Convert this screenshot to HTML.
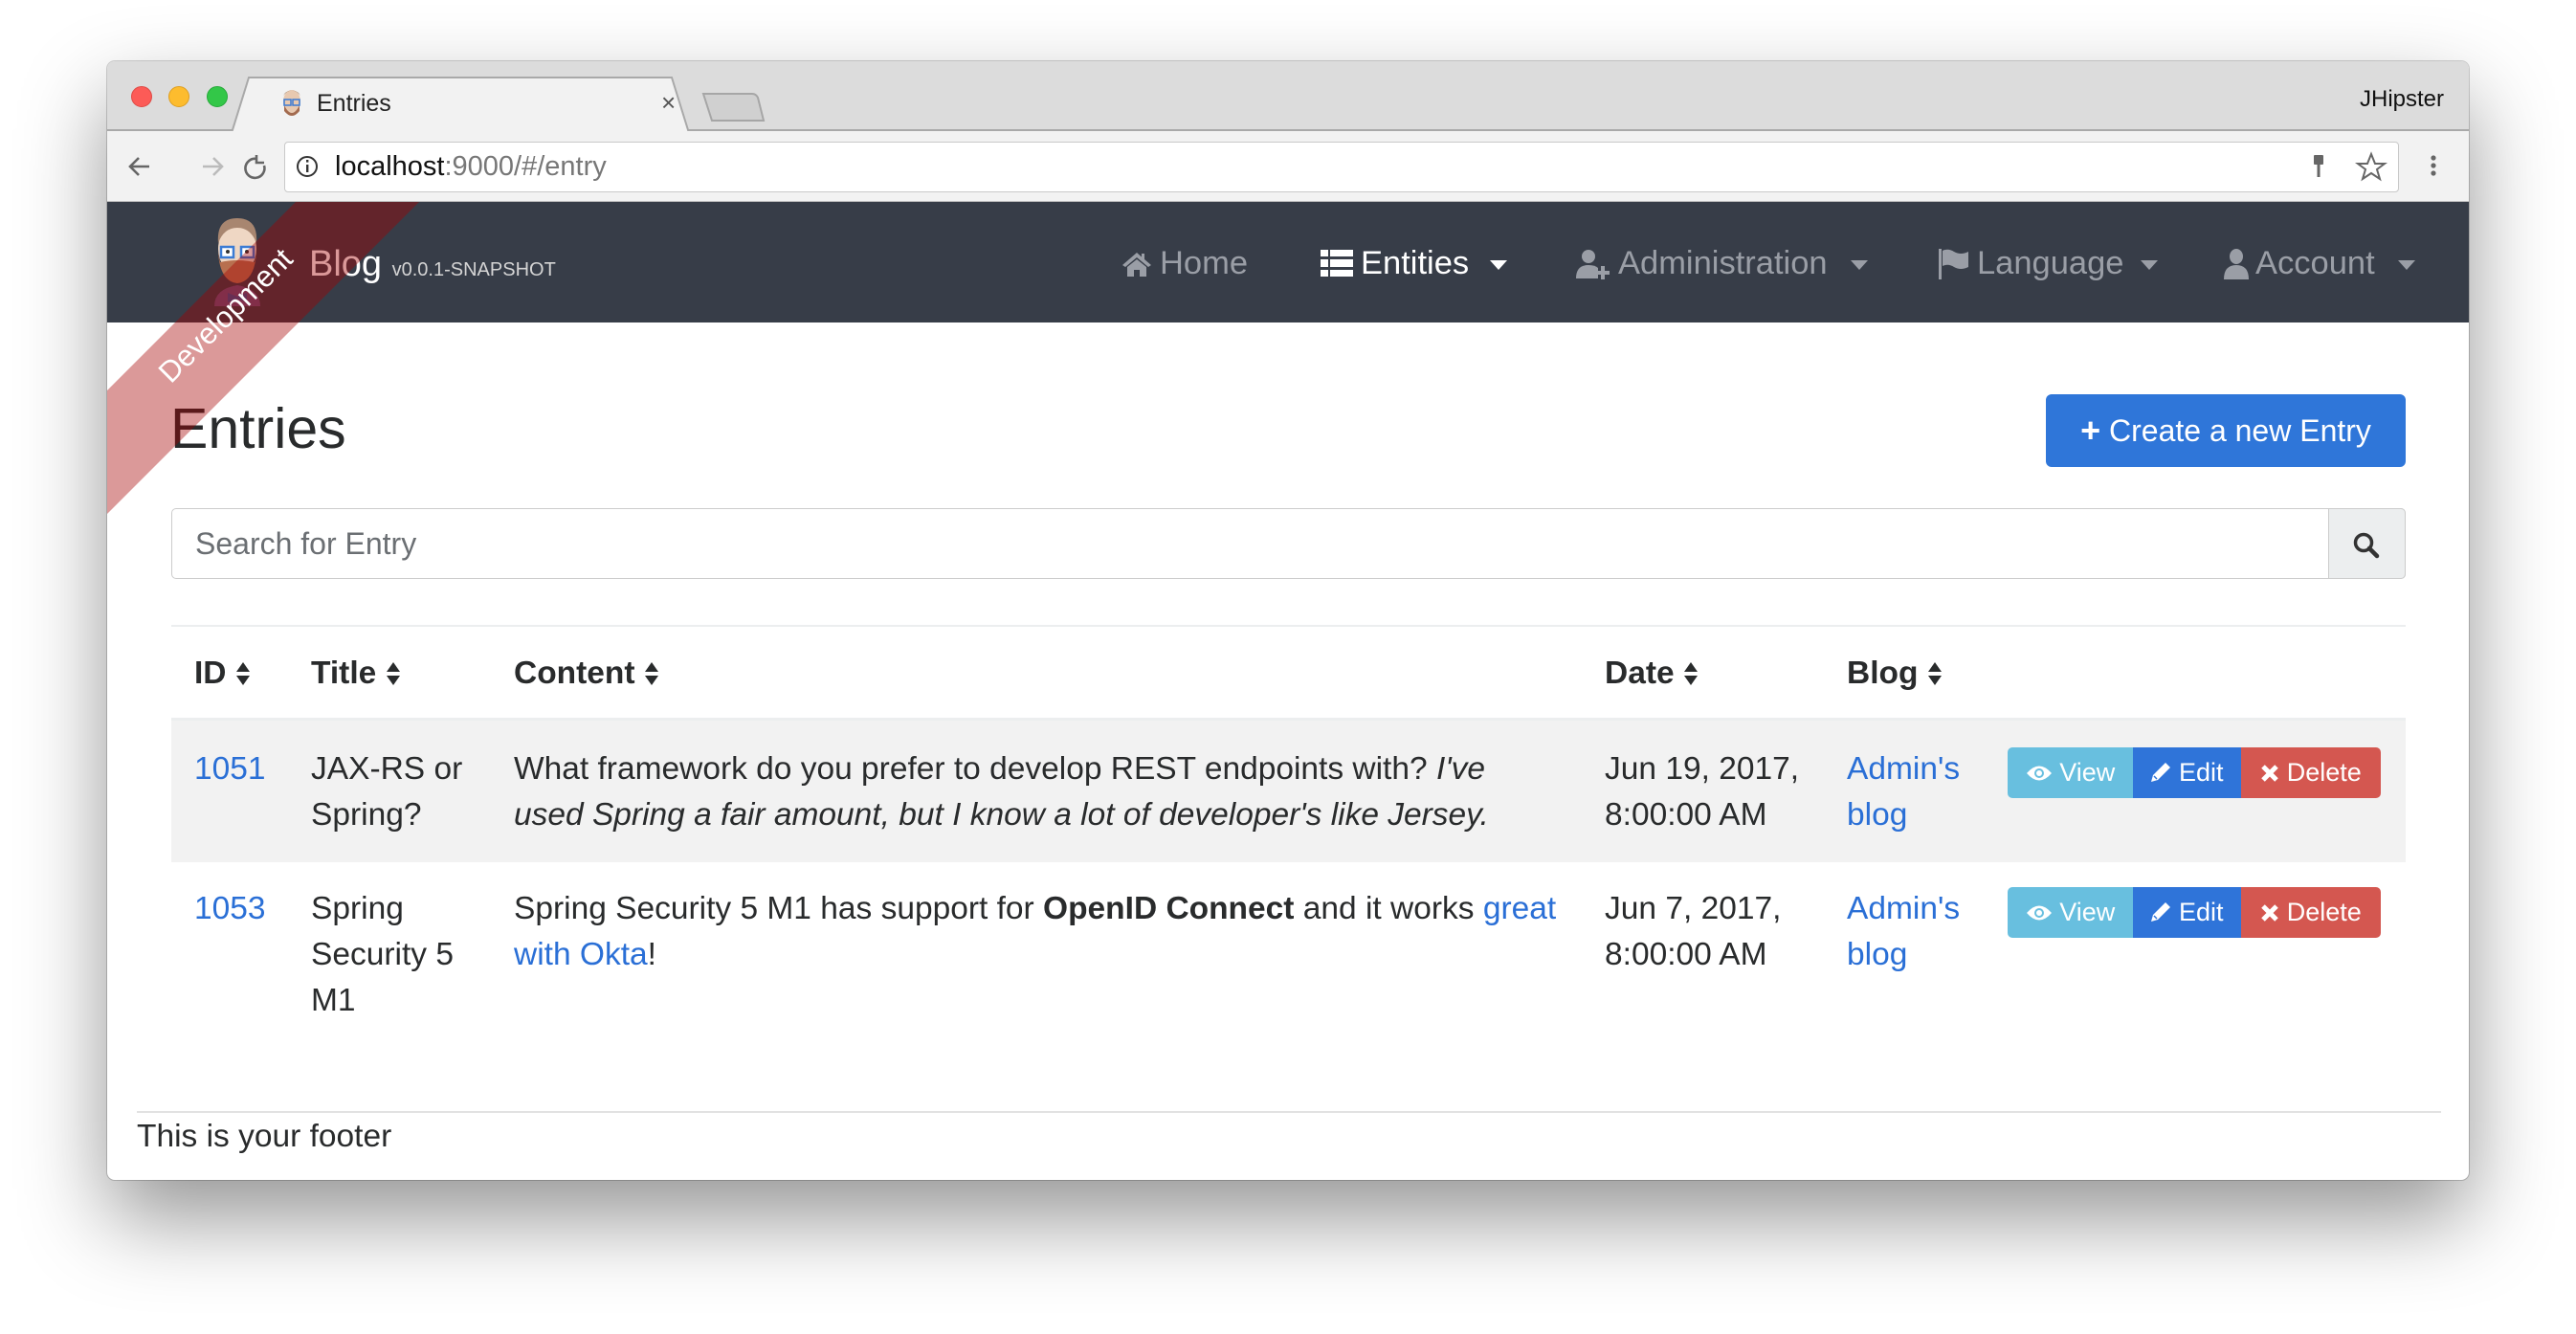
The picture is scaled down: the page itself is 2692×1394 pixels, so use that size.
<!DOCTYPE html>
<html><head><meta charset="utf-8"><style>
*{margin:0;padding:0;box-sizing:border-box}
body{width:2692px;height:1394px;background:#fff;font-family:"Liberation Sans",Arial,sans-serif;position:relative;overflow:hidden}
.win{position:absolute;left:112px;top:64px;width:2468px;height:1169px;border-radius:8px;overflow:hidden;background:#fff;box-shadow:0 40px 90px rgba(0,0,0,0.42),0 0 0 1px rgba(0,0,0,0.18)}
.a{position:absolute;white-space:nowrap}
.t{font-size:33.5px;color:#292b2c;line-height:48px}
.lnk{color:#2a6fd6}
.nav{font-size:34.5px;color:#9a9ea6;line-height:40px}
.btn{position:absolute;height:53px;color:#fff;font-size:27px;line-height:53px;text-align:center}
</style></head><body>
<div class="win">
  <div class="a" style="left:0;top:0;width:2468px;height:73px;background:#dcdcdc;border-bottom:2px solid #a9a9a9"></div>
  <div class="a" style="left:25px;top:26px;width:22px;height:22px;border-radius:50%;background:#fc5b57;border:1px solid #de4a45"></div>
  <div class="a" style="left:64px;top:26px;width:22px;height:22px;border-radius:50%;background:#fdbc2e;border:1px solid #de9f22"></div>
  <div class="a" style="left:104px;top:26px;width:22px;height:22px;border-radius:50%;background:#33c748;border:1px solid #27a93a"></div>
  <svg class="a" style="left:130px;top:16px" width="500" height="60"><path d="M0 59 L18 1 L460 1 L478 59" fill="#f2f2f2" stroke="#a9a9a9" stroke-width="2"/><rect x="0" y="57" width="478" height="4" fill="#f2f2f2"/></svg>
  <svg class="a" style="left:180px;top:28px" width="26" height="34" viewBox="0 0 26 34"><ellipse cx="13" cy="14" rx="9" ry="12" fill="#e8c9b0"/><path d="M4 8 Q13 -3 22 8 L20 5 Q13 0 6 5Z" fill="#a8876b"/><path d="M5 18 Q13 34 21 18 L21 24 Q13 34 5 24Z" fill="#a36b4f"/><rect x="5" y="12" width="7" height="6" fill="none" stroke="#3b7bd4" stroke-width="1.5"/><rect x="14" y="12" width="7" height="6" fill="none" stroke="#3b7bd4" stroke-width="1.5"/></svg>
  <div class="a" style="left:219px;top:30px;font-size:25px;line-height:28px;color:#222">Entries</div>
  <div class="a" style="left:579px;top:28px;font-size:26px;line-height:30px;color:#555">×</div>
  <svg class="a" style="left:620px;top:32px" width="70" height="34"><path d="M3 2 L54 2 Q58 2 60 6 L66 30 L12 30 Z" fill="#d0d0d0" stroke="#a6a6a6" stroke-width="2"/></svg>
  <div class="a" style="left:2354px;top:26px;font-size:24px;line-height:28px;color:#111">JHipster</div>
  <div class="a" style="left:0;top:73px;width:2468px;height:74px;background:#f2f2f2;border-bottom:1px solid #bdbdbd"></div>
  <svg class="a" style="left:20px;top:96px" width="300" height="30" stroke="#666" stroke-width="2.6" fill="none"><path d="M24 14 H4 M13 5 L4 14 L13 23"/><path d="M80 14 H100 M91 5 L100 14 L91 23" stroke="#bbb"/><path d="M136 6 A10 10 0 1 0 144 13 M136 2 V10 H144" /></svg>
  <div class="a" style="left:185px;top:84px;width:2210px;height:53px;background:#fff;border:1px solid #c9c9c9;border-radius:4px"></div>
  <svg class="a" style="left:196px;top:97px" width="28" height="28"><circle cx="13" cy="13" r="10" fill="none" stroke="#333" stroke-width="2"/><rect x="12" y="11" width="2.4" height="8" fill="#333"/><rect x="12" y="6" width="2.4" height="2.6" fill="#333"/></svg>
  <div class="a" style="left:238px;top:92px;font-size:29px;line-height:36px;color:#111">localhost<span style="color:#777">:9000/#/entry</span></div>
  <svg class="a" style="left:2300px;top:94px" width="160" height="36"><rect x="6" y="4" width="10" height="10" rx="1" fill="#666"/><rect x="9.5" y="13" width="3" height="14" fill="#666"/><path d="M66 3 L70 13 L80 13 L72 19 L75 29 L66 23 L57 29 L60 19 L52 13 L62 13 Z" fill="none" stroke="#666" stroke-width="2"/><circle cx="131" cy="7" r="2.6" fill="#666"/><circle cx="131" cy="15" r="2.6" fill="#666"/><circle cx="131" cy="23" r="2.6" fill="#666"/></svg>
  <div class="a" style="left:0;top:147px;width:2468px;height:126px;background:#373d48"></div>
  <svg class="a" style="left:104px;top:160px" width="64" height="96" viewBox="0 0 64 96"><path d="M8 96 Q8 78 32 74 Q56 78 56 96Z" fill="#6b4d7a"/><ellipse cx="32" cy="36" rx="20" ry="26" fill="#efd7c4"/><path d="M12 30 Q10 4 32 4 Q54 4 52 30 Q46 14 32 14 Q18 14 12 30Z" fill="#a88670"/><path d="M12 40 Q14 70 32 72 Q50 70 52 40 L50 50 Q32 46 14 50Z" fill="#b8704f"/><rect x="15" y="34" width="13" height="11" fill="#fff" stroke="#3b7bd4" stroke-width="2.5"/><rect x="36" y="34" width="13" height="11" fill="#fff" stroke="#3b7bd4" stroke-width="2.5"/><circle cx="22" cy="39" r="2" fill="#333"/><circle cx="42" cy="39" r="2" fill="#333"/><path d="M22 82 L32 86 L42 82 L42 92 L32 88 L22 92Z" fill="#3e4f8d"/></svg>
  <div class="a" style="left:211px;top:190px;font-size:38px;line-height:44px;color:#fff">Blog <span style="font-size:20px;color:#d4d4d4">v0.0.1-SNAPSHOT</span></div>
  <svg class="a" style="left:1060px;top:198px" width="32" height="28" viewBox="0 0 32 28" fill="#9a9ea6"><path d="M16 2 L1 15 L4 17 L16 7 L28 17 L31 15 L24 9 V3 H21 V6.5Z"/><path d="M6 17 L16 9 L26 17 V27 H19 V20 H13 V27 H6Z"/></svg>
  <div class="a nav" style="left:1100px;top:191px">Home</div>
  <svg class="a" style="left:1268px;top:197px" width="34" height="28" fill="#fff"><rect x="0" y="0" width="8" height="7"/><rect x="10" y="0" width="24" height="7"/><rect x="0" y="10" width="8" height="8"/><rect x="10" y="10" width="24" height="8"/><rect x="0" y="21" width="8" height="7"/><rect x="10" y="21" width="24" height="7"/></svg>
  <div class="a nav" style="left:1310px;top:191px;color:#fff">Entities</div>
  <svg class="a" style="left:1444px;top:207px" width="20" height="12"><path d="M1 1 H19 L10 11Z" fill="#fff"/></svg>
  <svg class="a" style="left:1535px;top:196px" width="38" height="32" fill="#9a9ea6"><circle cx="13" cy="8" r="7"/><path d="M0 31 Q0 17 13 17 Q20 17 23 20 L23 31Z"/><path d="M26 18 H30 V23 H35 V27 H30 V32 H26 V27 H21 V23 H26Z"/></svg>
  <div class="a nav" style="left:1579px;top:191px">Administration</div>
  <svg class="a" style="left:1821px;top:207px" width="20" height="12"><path d="M1 1 H19 L10 11Z" fill="#9a9ea6"/></svg>
  <svg class="a" style="left:1914px;top:196px" width="34" height="32" fill="#9a9ea6"><rect x="0" y="0" width="3" height="32"/><path d="M4 2 Q10 -1 16 3 Q23 7 31 3 V19 Q23 23 16 19 Q10 15 4 18Z"/></svg>
  <div class="a nav" style="left:1954px;top:191px">Language</div>
  <svg class="a" style="left:2124px;top:207px" width="20" height="12"><path d="M1 1 H19 L10 11Z" fill="#9a9ea6"/></svg>
  <svg class="a" style="left:2212px;top:196px" width="26" height="32" fill="#9a9ea6"><ellipse cx="13" cy="8" rx="7" ry="8"/><path d="M0 32 Q0 17 13 17 Q26 17 26 32Z"/></svg>
  <div class="a nav" style="left:2245px;top:191px">Account</div>
  <svg class="a" style="left:2393px;top:207px" width="20" height="12"><path d="M1 1 H19 L10 11Z" fill="#9a9ea6"/></svg>

  <div class="a" style="left:66px;top:347px;font-size:59px;line-height:74px;color:#292b2c">Entries</div>
  <div class="a" style="left:2026px;top:348px;width:376px;height:76px;background:#2f76d9;border-radius:6px;color:#fff;font-size:32px;line-height:76px;text-align:center"><b style="font-size:36px;vertical-align:-1px">+</b> Create a new Entry</div>
  <div class="a" style="left:67px;top:467px;width:2335px;height:74px;border:1px solid #ccc;border-radius:5px;background:#fff"></div>
  <div class="a" style="left:2321px;top:467px;width:81px;height:74px;border:1px solid #ccc;border-radius:0 5px 5px 0;background:#eceeef"></div>
  <svg class="a" style="left:2346px;top:491px" width="30" height="30"><circle cx="12" cy="12" r="8.5" fill="none" stroke="#333" stroke-width="3.5"/><path d="M18 18 L26 26" stroke="#333" stroke-width="4.5" stroke-linecap="round"/></svg>
  <div class="a" style="left:92px;top:484px;font-size:32px;line-height:40px;color:#6b6f73">Search for Entry</div>
  <div class="a" style="left:67px;top:589px;width:2335px;height:2px;background:#eceeef"></div>

  <div class="a t" style="left:91px;top:616px;font-weight:bold">ID <svg width="16" height="26" viewBox="0 0 16 26" style="vertical-align:-3px"><path d="M8 1 L15 11 H1Z M8 25 L15 15 H1Z" fill="#292b2c"/></svg></div>
  <div class="a t" style="left:213px;top:616px;font-weight:bold">Title <svg width="16" height="26" viewBox="0 0 16 26" style="vertical-align:-3px"><path d="M8 1 L15 11 H1Z M8 25 L15 15 H1Z" fill="#292b2c"/></svg></div>
  <div class="a t" style="left:425px;top:616px;font-weight:bold">Content <svg width="16" height="26" viewBox="0 0 16 26" style="vertical-align:-3px"><path d="M8 1 L15 11 H1Z M8 25 L15 15 H1Z" fill="#292b2c"/></svg></div>
  <div class="a t" style="left:1565px;top:616px;font-weight:bold">Date <svg width="16" height="26" viewBox="0 0 16 26" style="vertical-align:-3px"><path d="M8 1 L15 11 H1Z M8 25 L15 15 H1Z" fill="#292b2c"/></svg></div>
  <div class="a t" style="left:1818px;top:616px;font-weight:bold">Blog <svg width="16" height="26" viewBox="0 0 16 26" style="vertical-align:-3px"><path d="M8 1 L15 11 H1Z M8 25 L15 15 H1Z" fill="#292b2c"/></svg></div>
  <div class="a" style="left:67px;top:686px;width:2335px;height:3px;background:#eceeef"></div>

  <div class="a" style="left:67px;top:689px;width:2335px;height:148px;background:#f2f2f2"></div>
  <div class="a t lnk" style="left:91px;top:716px">1051</div>
  <div class="a t" style="left:213px;top:716px">JAX-RS or<br>Spring?</div>
  <div class="a t" style="left:425px;top:716px">What framework do you prefer to develop REST endpoints with? <i>I've<br>used Spring a fair amount, but I know a lot of developer's like Jersey.</i></div>
  <div class="a t" style="left:1565px;top:716px">Jun 19, 2017,<br>8:00:00 AM</div>
  <div class="a t lnk" style="left:1818px;top:716px">Admin's<br>blog</div>
  <div class="btn" style="left:1986px;top:717px;width:131px;background:#68bfdf;border-radius:5px 0 0 5px">
    <svg width="28" height="18" viewBox="0 0 28 18" style="vertical-align:-1px"><path d="M1 9 Q14 -6 27 9 Q14 24 1 9Z" fill="#fff"/><circle cx="14" cy="9" r="5" fill="#68bfdf"/><circle cx="14" cy="9" r="3" fill="#fff"/></svg> View</div>
  <div class="btn" style="left:2117px;top:717px;width:113px;background:#2f74d9">
    <svg width="22" height="22" viewBox="0 0 22 22" style="vertical-align:-2px"><path d="M16 1 L21 6 L8 19 L1 21 L3 14Z" fill="#fff"/><path d="M4 15 L7 18" stroke="#2f74d9" stroke-width="1.5"/></svg> Edit</div>
  <div class="btn" style="left:2230px;top:717px;width:146px;background:#d45750;border-radius:0 5px 5px 0">
    <svg width="20" height="20" viewBox="0 0 20 20" style="vertical-align:-2px"><path d="M3 3 L17 17 M17 3 L3 17" stroke="#fff" stroke-width="5"/></svg> Delete</div>

  <div class="a t lnk" style="left:91px;top:862px">1053</div>
  <div class="a t" style="left:213px;top:862px">Spring<br>Security 5<br>M1</div>
  <div class="a t" style="left:425px;top:862px">Spring Security 5 M1 has support for <b>OpenID Connect</b> and it works <span class="lnk">great<br>with Okta</span>!</div>
  <div class="a t" style="left:1565px;top:862px">Jun 7, 2017,<br>8:00:00 AM</div>
  <div class="a t lnk" style="left:1818px;top:862px">Admin's<br>blog</div>
  <div class="btn" style="left:1986px;top:863px;width:131px;background:#68bfdf;border-radius:5px 0 0 5px">
    <svg width="28" height="18" viewBox="0 0 28 18" style="vertical-align:-1px"><path d="M1 9 Q14 -6 27 9 Q14 24 1 9Z" fill="#fff"/><circle cx="14" cy="9" r="5" fill="#68bfdf"/><circle cx="14" cy="9" r="3" fill="#fff"/></svg> View</div>
  <div class="btn" style="left:2117px;top:863px;width:113px;background:#2f74d9">
    <svg width="22" height="22" viewBox="0 0 22 22" style="vertical-align:-2px"><path d="M16 1 L21 6 L8 19 L1 21 L3 14Z" fill="#fff"/><path d="M4 15 L7 18" stroke="#2f74d9" stroke-width="1.5"/></svg> Edit</div>
  <div class="btn" style="left:2230px;top:863px;width:146px;background:#d45750;border-radius:0 5px 5px 0">
    <svg width="20" height="20" viewBox="0 0 20 20" style="vertical-align:-2px"><path d="M3 3 L17 17 M17 3 L3 17" stroke="#fff" stroke-width="5"/></svg> Delete</div>

  <div class="a" style="left:31px;top:1097px;width:2408px;height:2px;background:#e2e2e2"></div>
  <div class="a t" style="left:31px;top:1100px">This is your footer</div>

  <svg class="a" style="left:0;top:0" width="400" height="500"><polygon points="197,147 326,147 0,473 0,344" fill="rgba(165,0,0,0.4)"/></svg>
  <div class="a" style="left:124px;top:266px;width:0;height:0">
    <div style="position:absolute;left:-130px;top:-19px;width:260px;text-align:center;font-size:31px;line-height:38px;color:#fff;transform:rotate(-45deg)">Development</div>
  </div>
</div>
</body></html>
